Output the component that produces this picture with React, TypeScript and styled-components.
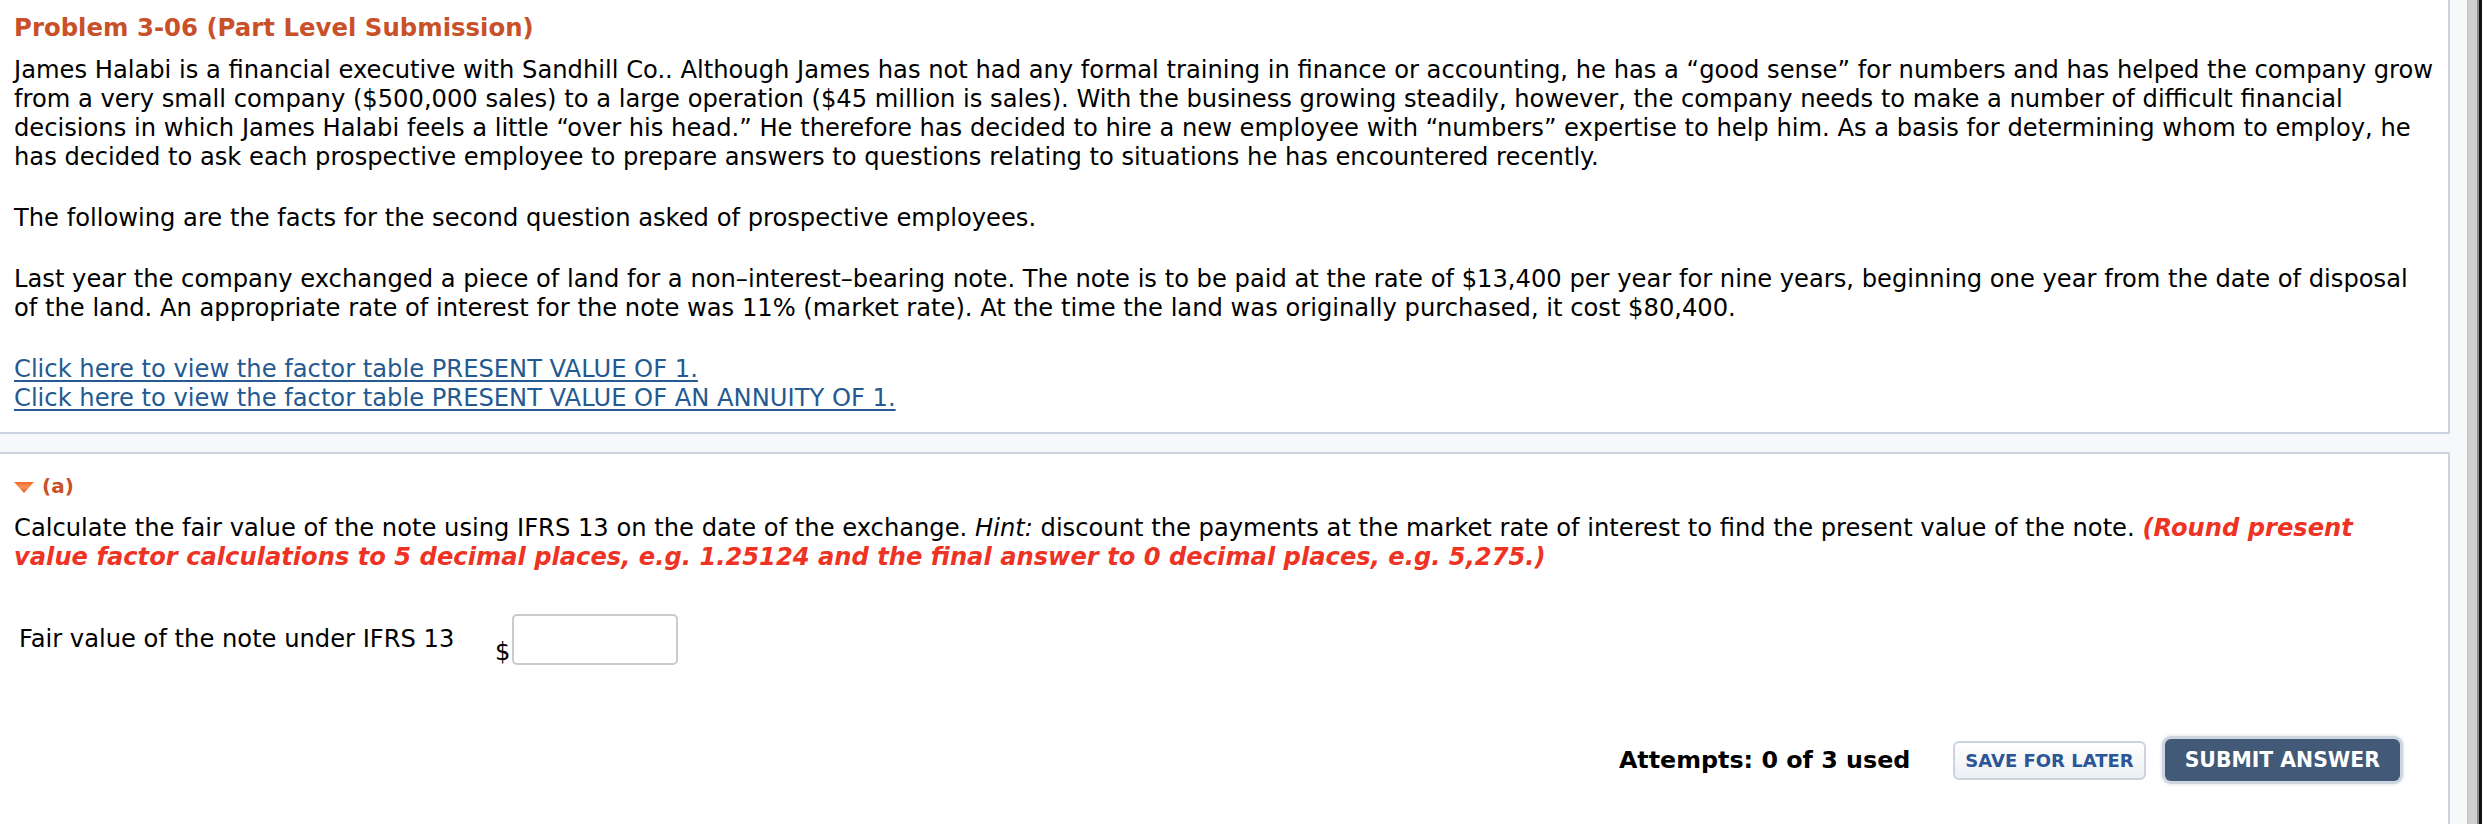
import React from 'react';
import styled, { createGlobalStyle } from 'styled-components';

const GlobalStyle = createGlobalStyle`
  html, body {
    margin: 0;
    padding: 0;
    background: #f7f8fa;
  }
  body {
    font-family: 'DejaVu Sans', Verdana, sans-serif;
    color: #000;
  }
`;

const App = () => {
  return (
    <>
      <GlobalStyle />
      <Page>
        <Main>
          <Panel>
            <Title>Problem 3-06 (Part Level Submission)</Title>
            <Paragraph>
              James Halabi is a financial executive with Sandhill Co.. Although James has not had any formal training in
              finance or accounting, he has a “good sense” for numbers and has helped the company grow
              <br />
              from a very small company ($500,000 sales) to a large operation ($45 million is sales). With the business
              growing steadily, however, the company needs to make a number of difficult financial
              <br />
              decisions in which James Halabi feels a little “over his head.” He therefore has decided to hire a new
              employee with “numbers” expertise to help him. As a basis for determining whom to employ, he
              <br />
              has decided to ask each prospective employee to prepare answers to questions relating to situations he has
              encountered recently.
            </Paragraph>
            <Paragraph>The following are the facts for the second question asked of prospective employees.</Paragraph>
            <Paragraph>
              Last year the company exchanged a piece of land for a non–interest–bearing note. The note is to be paid at
              the rate of $13,400 per year for nine years, beginning one year from the date of disposal
              <br />
              of the land. An appropriate rate of interest for the note was 11% (market rate). At the time the land was
              originally purchased, it cost $80,400.
            </Paragraph>
            <Paragraph last>
              <FactorLink href='#'>Click here to view the factor table PRESENT VALUE OF 1.</FactorLink>
              <br />
              <FactorLink href='#'>Click here to view the factor table PRESENT VALUE OF AN ANNUITY OF 1.</FactorLink>
            </Paragraph>
          </Panel>

          <PartPanel>
            <PartHeader>
              <Arrow width='20' height='11' viewBox='0 0 20 11'>
                <defs>
                  <linearGradient id='arrowFill' x1='0' y1='0' x2='0' y2='1'>
                    <stop offset='0' stopColor='#f26a26' />
                    <stop offset='0.45' stopColor='#f7935a' />
                    <stop offset='1' stopColor='#ea5a17' />
                  </linearGradient>
                </defs>
                <polygon points='0,0 20,0 10,11' fill='url(#arrowFill)' />
              </Arrow>
              <PartLabel>(a)</PartLabel>
            </PartHeader>

            <Paragraph last>
              Calculate the fair value of the note using IFRS 13 on the date of the exchange. <em>Hint:</em> discount
              the payments at the market rate of interest to find the present value of the note.{' '}
              <Warning>
                (Round present
                <br />
                value factor calculations to 5 decimal places, e.g. 1.25124 and the final answer to 0 decimal places,
                e.g. 5,275.)
              </Warning>
            </Paragraph>

            <AnswerRow>
              <AnswerLabel>Fair value of the note under IFRS 13</AnswerLabel>
              <Dollar>$</Dollar>
              <AnswerInput type='text' />
            </AnswerRow>

            <Footer>
              <Attempts>Attempts: 0 of 3 used</Attempts>
              <SaveButton>SAVE FOR LATER</SaveButton>
              <SubmitButton>SUBMIT ANSWER</SubmitButton>
            </Footer>
          </PartPanel>
        </Main>
        <Scrollbar />
      </Page>
    </>
  );
};

const Page = styled.div`
  display: flex;
  width: 2482px;
  height: 824px;
  overflow: hidden;
  background: #f7f8fa;
`;

const Main = styled.div`
  flex: 1;
  padding-right: 17px;
  display: flex;
  flex-direction: column;
`;

const Scrollbar = styled.div`
  width: 11px;
  background: #cfcfcf;
  border-left: 1px solid #c4c4c4;
  box-shadow: inset -2px 0 0 #8d8d8d;
  border-right: 3px solid #111;
`;

const Panel = styled.div`
  background: #fff;
  border: 2px solid #cad3df;
  border-top: none;
  border-left: none;
  padding: 13px 10px 19px 14px;
`;

const PartPanel = styled(Panel)`
  margin-top: 18px;
  border-top: 2px solid #cad3df;
  border-bottom: none;
  flex: 1;
  padding-top: 18px;
  padding-right: 48px;
`;

const Title = styled.div`
  font-size: 24.4px;
  line-height: 29px;
  font-weight: bold;
  color: #c9512a;
  margin-bottom: 14px;
`;

const Paragraph = styled.p<{ last?: boolean }>`
  margin: 0 0 ${({ last }) => (last ? 0 : 32)}px;
  font-size: 24.2px;
  line-height: 29px;
  white-space: nowrap;
  em {
    font-style: italic;
  }
`;

const FactorLink = styled.a`
  color: #245a91;
  text-decoration: underline;
  text-underline-offset: 3px;
`;

const PartHeader = styled.div`
  display: flex;
  align-items: center;
  gap: 8px;
  margin-bottom: 13px;
`;

const Arrow = styled.svg`
  display: block;
  margin-top: 2px;
`;

const PartLabel = styled.span`
  font-size: 20px;
  line-height: 29px;
  font-weight: bold;
  color: #c9512a;
`;

const Warning = styled.strong`
  font-weight: bold;
  font-style: italic;
  color: #ee3324;
`;

const AnswerRow = styled.div`
  display: flex;
  align-items: center;
  margin-top: 42px;
`;

const AnswerLabel = styled.span`
  font-size: 24.2px;
  line-height: 29px;
  padding-left: 5px;
  width: 476px;
`;

const Dollar = styled.span`
  align-self: flex-end;
  font-size: 24.2px;
  line-height: 26px;
  margin-right: 2px;
`;

const AnswerInput = styled.input`
  width: 166px;
  height: 51px;
  box-sizing: border-box;
  border: 2px solid #cbcbcb;
  border-radius: 5px;
  background: #fff;
  outline: none;
`;

const Footer = styled.div`
  display: flex;
  justify-content: flex-end;
  align-items: center;
  margin-top: 74px;
`;

const Attempts = styled.span`
  font-size: 23.8px;
  font-weight: bold;
  margin-right: 43px;
`;

const SaveButton = styled.button`
  height: 39px;
  padding: 0 10px;
  border: 2px solid #cbd3de;
  border-radius: 6px;
  background: linear-gradient(#ffffff, #eceff4);
  color: #2c5595;
  font-family: 'DejaVu Sans', Verdana, sans-serif;
  font-size: 18px;
  font-weight: bold;
  margin-right: 19px;
`;

const SubmitButton = styled.button`
  height: 42px;
  padding: 0 20px;
  border: none;
  border-radius: 6px;
  background: #425a77;
  box-shadow: 0 0 0 3px #ccd5df, 0 0 3px 4px #e3e8ee;
  color: #fff;
  font-family: 'DejaVu Sans', Verdana, sans-serif;
  font-size: 20.4px;
  font-weight: bold;
`;

export default App;
